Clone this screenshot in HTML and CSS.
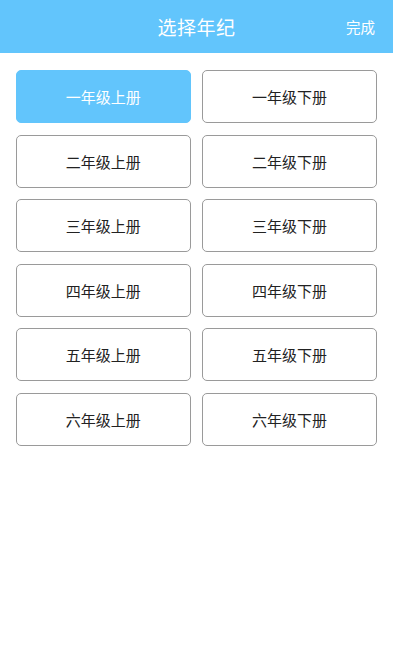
FILE: index.html
```html
<!DOCTYPE html>
<html lang="zh-CN">
<head>
<meta charset="utf-8">
<title>选择年纪</title>
<link rel="stylesheet" href="styles.css">
</head>
<body>
<header class="topbar">
  <h1 class="title">选择年纪</h1>
  <span class="done">完成</span>
</header>
<main class="grid">
  <div class="item active">一年级上册</div>
  <div class="item">一年级下册</div>
  <div class="item">二年级上册</div>
  <div class="item">二年级下册</div>
  <div class="item">三年级上册</div>
  <div class="item">三年级下册</div>
  <div class="item">四年级上册</div>
  <div class="item">四年级下册</div>
  <div class="item">五年级上册</div>
  <div class="item">五年级下册</div>
  <div class="item">六年级上册</div>
  <div class="item">六年级下册</div>
</main>
</body>
</html>
```
FILE: styles.css
```css
html, body {
  margin: 0;
  padding: 0;
  background: #ffffff;
  font-family: "Noto Sans CJK SC", "Noto Sans", sans-serif;
}
.topbar {
  position: relative;
  height: 53px;
  background: #62c5fc;
  display: flex;
  align-items: center;
  justify-content: center;
}
.title {
  margin: 0;
  font-size: 19px;
  font-weight: 400;
  color: #ffffff;
  line-height: 1;
  letter-spacing: 0.5px;
}
.done {
  position: absolute;
  right: 18px;
  top: 50%;
  transform: translateY(-50%);
  font-size: 14.5px;
  color: #ffffff;
  line-height: 1;
}
.grid {
  display: grid;
  grid-template-columns: 1fr 1fr;
  column-gap: 11.5px;
  row-gap: 11.6px;
  padding: 17px 16px 0 16px;
}
.item {
  height: 53px;
  box-sizing: border-box;
  border: 1px solid #9a9a9a;
  border-radius: 5px;
  display: flex;
  align-items: center;
  justify-content: center;
  font-size: 15px;
  color: #222222;
}
.item.active {
  background: #62c5fc;
  border-color: #62c5fc;
  color: #ffffff;
}
```
